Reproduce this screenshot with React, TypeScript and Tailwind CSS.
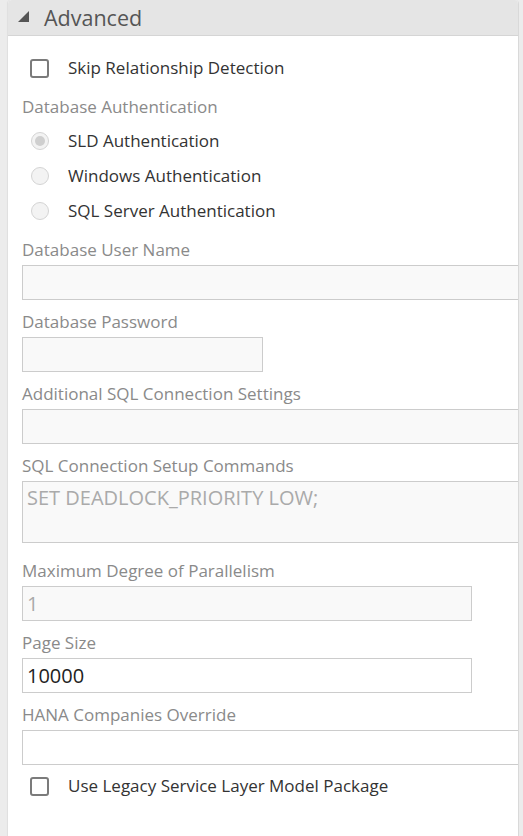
import React from "react";

const font = { fontFamily: '"Open Sans", "Noto Sans", sans-serif' };

function Checkbox({ label }: { label: string }) {
  return (
    <div className="flex items-center h-[22px]">
      <div className="ml-[8px] w-[19px] h-[19px] rounded-[3px] border-2 border-[#7b7b7b] bg-white" />
      <span className="ml-[19px] text-[17px] leading-[22px] text-[#333]">{label}</span>
    </div>
  );
}

function Radio({ label, checked }: { label: string; checked?: boolean }) {
  return (
    <div className="flex items-center h-[35px]">
      <div className="ml-[9px] w-[18px] h-[18px] rounded-full border border-[#d4d4d4] bg-[#f3f3f3] flex items-center justify-center">
        {checked && <div className="w-[10px] h-[10px] rounded-full bg-[#cfcfcf]" />}
      </div>
      <span className="ml-[19px] text-[17px] leading-[22px] text-[#333]">{label}</span>
    </div>
  );
}

function Label({ children }: { children: React.ReactNode }) {
  return <div className="text-[17px] leading-[22px] text-[#8a8a8a]">{children}</div>;
}

export default function App() {
  return (
    <div className="h-[836px] bg-[#ececec] pl-[8px] pr-[4px] overflow-hidden" style={font}>
      <div className="h-[836px] bg-white rounded-t-[4px] overflow-hidden border-r border-[#d9d9d9] shadow-[-1px_0_1px_rgba(0,0,0,0.06)]">
        <div className="h-[36px] bg-[#e5e5e5] border-b border-[#d5d5d5] flex items-center">
          <svg width="11" height="11" viewBox="0 0 11 11" className="ml-[10px] mt-[-2px]">
            <polygon points="11,0 11,11 0,11" fill="#555" />
          </svg>
          <span className="ml-[15px] text-[21.5px] leading-[28px] text-[#555]">Advanced</span>
        </div>
        <div className="pl-[14px] pt-[21px]">
          <Checkbox label="Skip Relationship Detection" />
          <div className="mt-[17px]">
            <Label>Database Authentication</Label>
          </div>
          <div className="mt-[5px]">
            <Radio label="SLD Authentication" checked />
            <Radio label="Windows Authentication" />
            <Radio label="SQL Server Authentication" />
          </div>

          <div className="mt-[11px]">
            <Label>Database User Name</Label>
            <div className="mt-[4px] h-[35px] w-[520px] border border-[#cccccc] bg-[#f9f9f9]" />
          </div>
          <div className="mt-[11px]">
            <Label>Database Password</Label>
            <div className="mt-[4px] h-[35px] w-[241px] border border-[#cccccc] bg-[#f9f9f9]" />
          </div>
          <div className="mt-[11px]">
            <Label>Additional SQL Connection Settings</Label>
            <div className="mt-[4px] h-[35px] w-[520px] border border-[#cccccc] bg-[#f9f9f9]" />
          </div>
          <div className="mt-[11px]">
            <Label>SQL Connection Setup Commands</Label>
            <div className="mt-[4px] h-[62px] w-[520px] border border-[#cccccc] bg-[#f9f9f9] px-[4px] pt-[2px] text-[20px] leading-[28px] text-[#aaaaaa]">
              SET DEADLOCK_PRIORITY LOW;
            </div>
          </div>
          <div className="mt-[17px]">
            <Label>Maximum Degree of Parallelism</Label>
            <div className="mt-[4px] h-[35px] w-[450px] border border-[#cccccc] bg-[#f9f9f9] px-[4px] flex items-center text-[20px] text-[#aaaaaa]">
              1
            </div>
          </div>
          <div className="mt-[11px]">
            <Label>Page Size</Label>
            <div className="mt-[4px] h-[35px] w-[450px] border border-[#cccccc] bg-white px-[4px] flex items-center text-[20px] text-[#222]">
              10000
            </div>
          </div>
          <div className="mt-[11px]">
            <Label>HANA Companies Override</Label>
            <div className="mt-[4px] h-[35px] w-[520px] border border-[#cccccc] bg-white" />
          </div>
          <div className="mt-[10px]">
            <Checkbox label="Use Legacy Service Layer Model Package" />
          </div>
        </div>
      </div>
    </div>
  );
}
